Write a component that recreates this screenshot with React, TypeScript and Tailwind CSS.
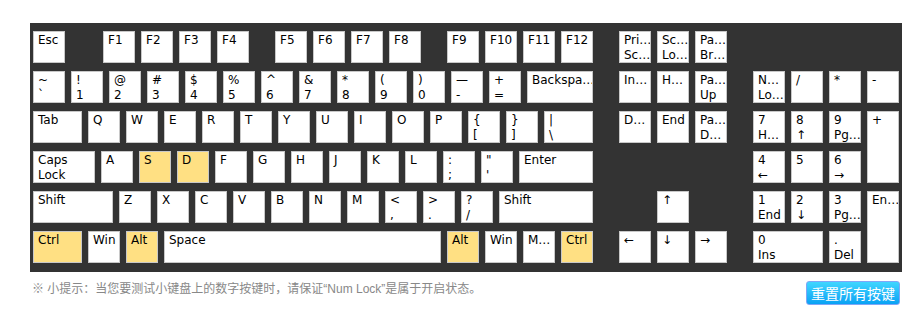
import React from "react";

type KeyProps = {
  top: string;
  bottom?: string;
  className?: string;
  hl?: boolean;
};

function Key({ top, bottom, className = "w-8 h-8", hl }: KeyProps) {
  return (
    <div
      className={`${className} box-border shrink-0 overflow-hidden whitespace-nowrap border border-[#c8c8c8] pl-[4px] pt-px text-[12px] leading-[15px] text-black ${
        hl ? "bg-[#ffe083]" : "bg-white"
      }`}
    >
      <div>{top}</div>
      {bottom && <div>{bottom}</div>}
    </div>
  );
}

const numRow: [string, string][] = [
  ["~", "`"],
  ["!", "1"],
  ["@", "2"],
  ["#", "3"],
  ["$", "4"],
  ["%", "5"],
  ["^", "6"],
  ["&", "7"],
  ["*", "8"],
  ["(", "9"],
  [")", "0"],
  ["—", "-"],
  ["+", "="],
];

const pressed = ["S", "D"];

export default function App() {
  return (
    <div className="font-['DejaVu_Sans',sans-serif]">
      {/* keyboard panel */}
      <div className="ml-[30px] mt-[23px] flex w-[872px] gap-[26px] bg-[#333333] pb-[9px] pl-[3px] pr-[3px] pt-2">
        {/* main block */}
        <div className="flex w-[560px] flex-col gap-2">
          <div className="flex gap-[6px]">
            <Key top="Esc" />
            <Key top="F1" className="ml-[32px] w-8 h-8" />
            <Key top="F2" />
            <Key top="F3" />
            <Key top="F4" />
            <Key top="F5" className="ml-5 w-8 h-8" />
            <Key top="F6" />
            <Key top="F7" />
            <Key top="F8" />
            <Key top="F9" className="ml-5 w-8 h-8" />
            <Key top="F10" />
            <Key top="F11" />
            <Key top="F12" />
          </div>
          <div className="flex gap-[6px]">
            {numRow.map(([t, b]) => (
              <Key key={b} top={t} bottom={b} />
            ))}
            <Key top="Backspa…" className="w-[66px] h-8" />
          </div>
          <div className="flex gap-[6px]">
            <Key top="Tab" className="w-[49px] h-8" />
            {"QWERTYUIOP".split("").map((c) => (
              <Key key={c} top={c} />
            ))}
            <Key top="{" bottom="[" />
            <Key top="}" bottom="]" />
            <Key top="|" bottom="\" className="w-[49px] h-8" />
          </div>
          <div className="flex gap-[6px]">
            <Key top="Caps" bottom="Lock" className="w-[62px] h-8" />
            {"ASDFGHJKL".split("").map((c) => (
              <Key key={c} top={c} hl={pressed.includes(c)} />
            ))}
            <Key top=":" bottom=";" />
            <Key top={'"'} bottom="'" />
            <Key top="Enter" className="w-[74px] h-8" />
          </div>
          <div className="flex gap-[6px]">
            <Key top="Shift" className="w-[80px] h-8" />
            {"ZXCVBNM".split("").map((c) => (
              <Key key={c} top={c} />
            ))}
            <Key top="<" bottom="," />
            <Key top=">" bottom="." />
            <Key top="?" bottom="/" />
            <Key top="Shift" className="w-[94px] h-8" />
          </div>
          <div className="flex gap-[6px]">
            <Key top="Ctrl" className="w-[49px] h-8" hl />
            <Key top="Win" />
            <Key top="Alt" hl />
            <Key top="Space" className="w-[277px] h-8" />
            <Key top="Alt" hl />
            <Key top="Win" />
            <Key top="M…" />
            <Key top="Ctrl" hl />
          </div>
        </div>

        {/* navigation block */}
        <div className="grid grid-cols-[repeat(3,32px)] grid-rows-[repeat(6,32px)] gap-x-[6px] gap-y-2">
          <Key top="Pri…" bottom="Sc…" />
          <Key top="Sc…" bottom="Lo…" />
          <Key top="Pa…" bottom="Br…" />
          <Key top="In…" />
          <Key top="H…" />
          <Key top="Pa…" bottom="Up" />
          <Key top="D…" />
          <Key top="End" />
          <Key top="Pa…" bottom="D…" />
          <Key top="↑" className="col-start-2 row-start-5 w-8 h-8" />
          <Key top="←" className="col-start-1 row-start-6 w-8 h-8" />
          <Key top="↓" className="col-start-2 row-start-6 w-8 h-8" />
          <Key top="→" className="col-start-3 row-start-6 w-8 h-8" />
        </div>

        {/* numpad */}
        <div className="grid grid-cols-[repeat(4,32px)] grid-rows-[repeat(6,32px)] gap-x-[6px] gap-y-2">
          <div className="col-span-4" />
          <Key top="N…" bottom="Lo…" />
          <Key top="/" />
          <Key top="*" />
          <Key top="-" />
          <Key top="7" bottom="H…" />
          <Key top="8" bottom="↑" />
          <Key top="9" bottom="Pg…" />
          <Key top="+" className="row-span-2 w-8 h-[72px]" />
          <Key top="4" bottom="←" />
          <Key top="5" />
          <Key top="6" bottom="→" />
          <Key top="1" bottom="End" />
          <Key top="2" bottom="↓" />
          <Key top="3" bottom="Pg…" />
          <Key top="En…" className="row-span-2 w-8 h-[72px]" />
          <Key top="0" bottom="Ins" className="col-span-2 w-[70px] h-8" />
          <Key top="." bottom="Del" />
        </div>
      </div>

      {/* footer */}
      <div className="ml-[30px] flex w-[872px] items-start justify-between pl-[2px] pr-[2px]">
        <p className="mt-[7px] font-['Liberation_Sans','Noto_Sans_CJK_SC',sans-serif] text-[12px] leading-[20px] text-[#888888]">
          ※ 小提示：当您要测试小键盘上的数字按键时，请保证“Num Lock”是属于开启状态。
        </p>
        <button className="mt-[9px] box-border h-[24px] w-[94px] rounded-[3px] border border-[#7fa6f7] bg-linear-to-b from-[#3fd6ff] to-[#08a2f4] font-['Noto_Sans_CJK_SC',sans-serif] text-[14px] leading-[22px] text-white">
          重置所有按键
        </button>
      </div>
    </div>
  );
}
